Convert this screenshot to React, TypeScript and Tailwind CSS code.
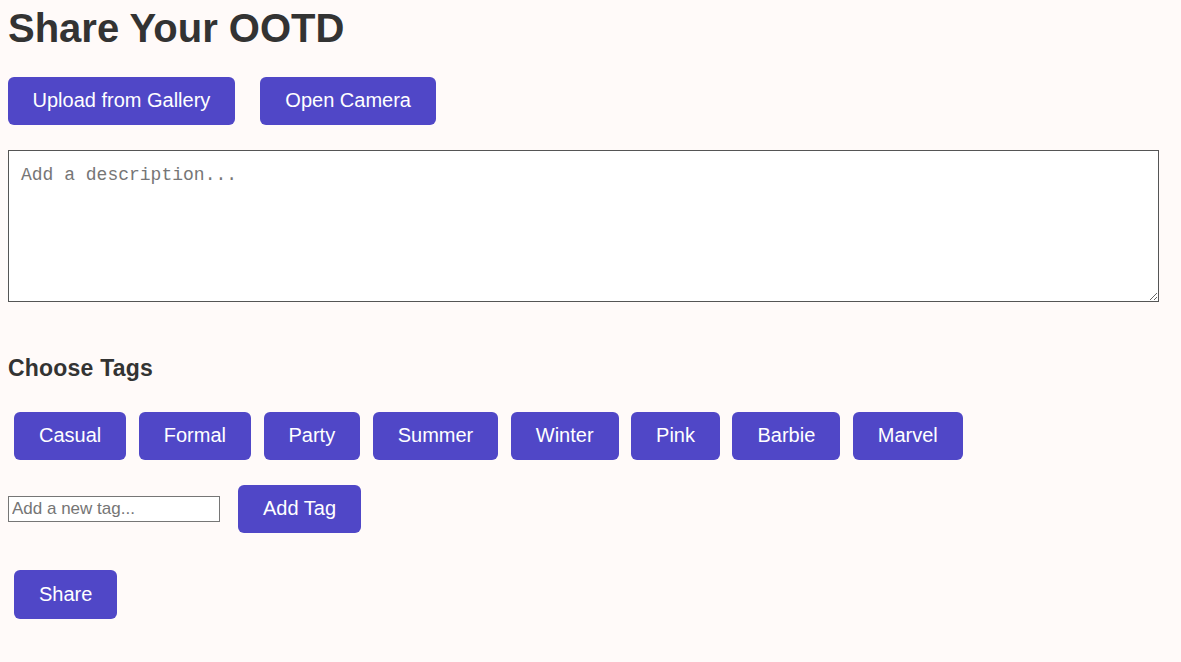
import React from 'react';

const TAGS = ['Casual', 'Formal', 'Party', 'Summer', 'Winter', 'Pink', 'Barbie', 'Marvel'];

const btn = 'bg-[#5047c7] text-white text-[20px] leading-[24px] pt-[11px] pb-[13px] rounded-[6px]';

export default function App() {
  return (
    <div className="min-h-screen bg-[#fffaf9] px-2 pb-10 font-['Liberation_Sans',Arial,sans-serif] text-[#333]">
      <h1 className="pt-[5px] text-[40px] font-bold leading-[46px]">Share Your OOTD</h1>

      {/* upload buttons */}
      <div className="mt-[26px] flex gap-[25px]">
        <button className={`${btn} px-[24.5px]`}>Upload from Gallery</button>
        <button className={`${btn} px-[25.5px]`}>Open Camera</button>
      </div>

      <textarea
        placeholder="Add a description..."
        className="mt-[25px] block h-[152px] w-[1151px] border border-[#555] bg-white px-3 pt-[14px] pb-3 font-['Liberation_Mono',monospace] text-[18px] leading-[21px] placeholder:text-[#767676]"
      />

      <h3 className="mt-[53px] text-[23px] font-bold leading-[27px] tracking-[0.2px]">Choose Tags</h3>

      <div className="ml-[6px] mt-[30px] flex gap-[12.5px]">
        {TAGS.map(t => (
          <button key={t} className={`${btn} px-[25px]`}>{t}</button>
        ))}
      </div>

      <div className="mt-[25px] flex items-center gap-[18px]">
        <input
          placeholder="Add a new tag..."
          className="h-[26px] w-[212px] border border-[#767676] bg-white px-[3px] text-[17px] placeholder:text-[#757575]"
        />
        <button className={`${btn} px-[25px]`}>Add Tag</button>
      </div>

      <button className={`${btn} ml-[6px] mt-[37px] px-[25px] pt-[12px] pb-[12px]`}>Share</button>
    </div>
  );
}
